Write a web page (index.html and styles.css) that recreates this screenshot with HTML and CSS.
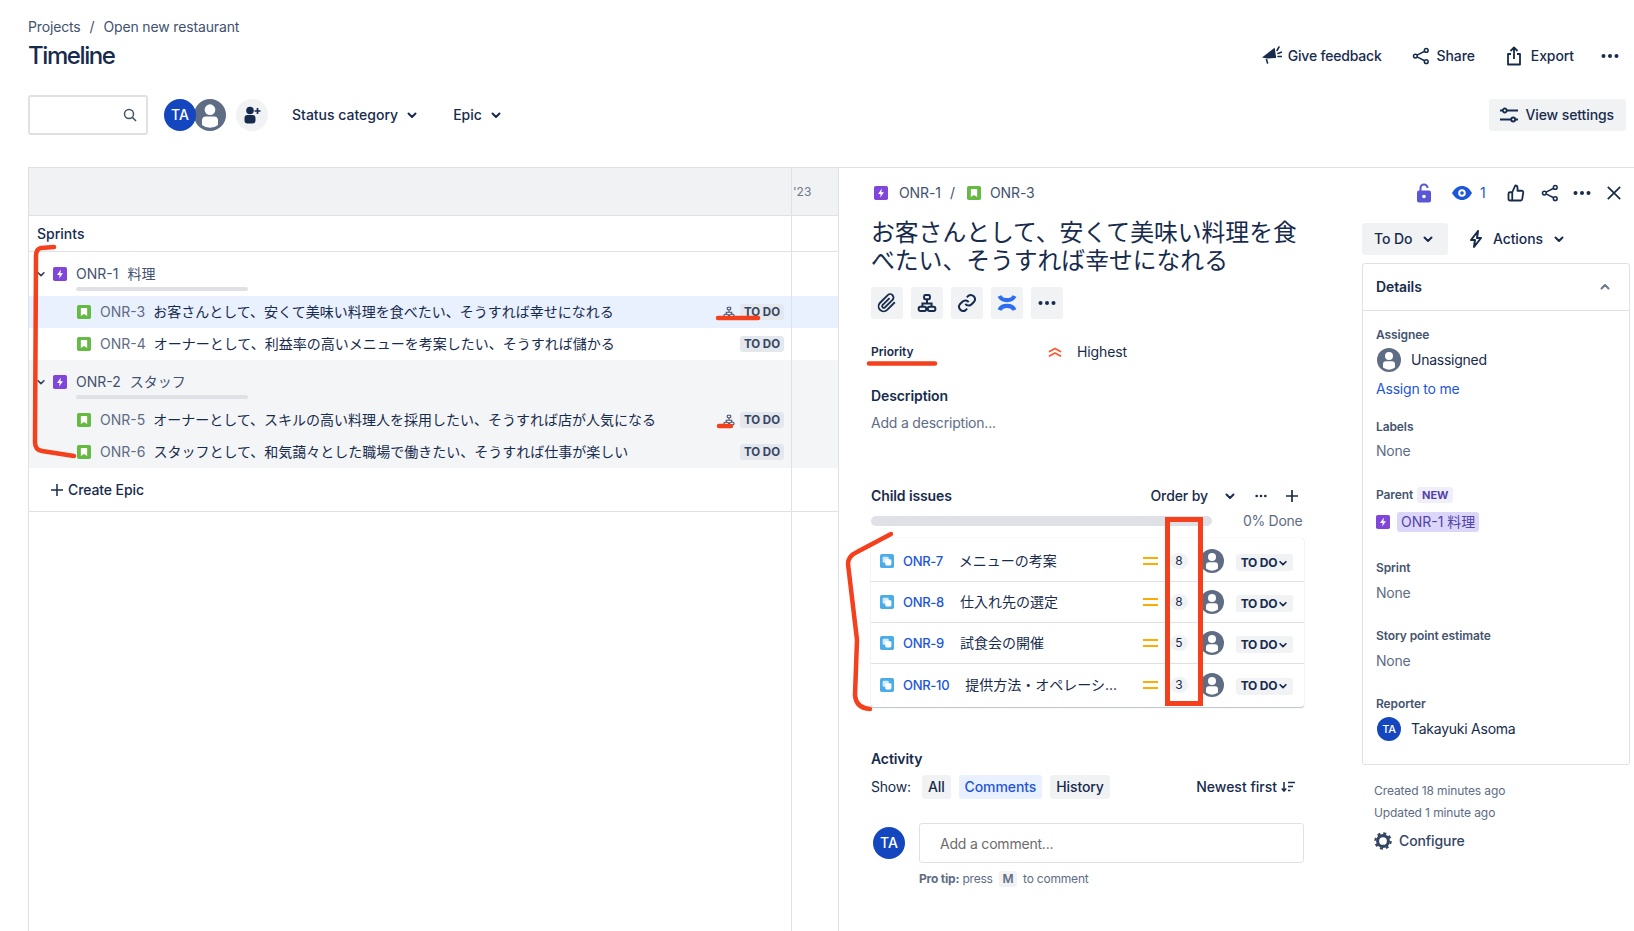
FILE: index.html
```html
<!DOCTYPE html>
<html lang="en">
<head>
  <meta charset="UTF-8">
  <title>Timeline</title>
  <link rel="stylesheet" href="styles.css">
</head>
<body>
  <svg class="sprite" width="0" height="0">
    <symbol id="chev" viewBox="0 0 12 12"><path d="M2.500 4.500 6 8l3.500-3.500" fill="none" stroke="currentColor" stroke-width="2" stroke-linecap="round" stroke-linejoin="round"/></symbol>
    <symbol id="dots" viewBox="0 0 18 6"><circle cx="2.500" cy="3" r="2"/><circle cx="9" cy="3" r="2"/><circle cx="15.500" cy="3" r="2"/></symbol>
    <symbol id="share" viewBox="0 0 24 24"><g fill="none" stroke="currentColor" stroke-width="2"><circle cx="19" cy="4.500" r="2.500"/><circle cx="4.500" cy="12" r="2.500"/><circle cx="19" cy="19.500" r="2.500"/><path d="M6.800 10.800 16.800 5.700M6.800 13.200l10 5.100"/></g></symbol>
    <symbol id="epic" viewBox="0 0 16 16"><rect width="16" height="16" rx="2" fill="#7f46d9"/><path d="M9 2.800 4.600 9h3l-.6 4.200L11.400 7h-3z" fill="#fff"/></symbol>
    <symbol id="story" viewBox="0 0 16 16"><rect width="16" height="16" rx="2" fill="#65ba43"/><path d="M5 3.500h6a.6.6 0 0 1 .6.6v8.600L8 10.300l-3.600 2.400V4.100a.6.6 0 0 1 .6-.6z" fill="#fff"/></symbol>
    <symbol id="subtask" viewBox="0 0 16 16"><rect width="16" height="16" rx="2" fill="#4bade8"/><rect x="3" y="3" width="7" height="7" rx="1.500" fill="#fff" opacity=".75"/><rect x="6" y="6" width="7" height="7" rx="1.500" fill="#fff"/></symbol>
    <symbol id="nobody" viewBox="0 0 24 24"><circle cx="12" cy="12" r="12" fill="#5e6c84"/><circle cx="12" cy="8" r="4" fill="#fff"/><path d="M6 16.200a3 3 0 0 1 3-3h6a3 3 0 0 1 3 3v3.300a9.500 9.500 0 0 1-12 0z" fill="#fff"/></symbol>
    <symbol id="tree" viewBox="0 0 24 24"><g fill="none" stroke="currentColor"><rect x="8.500" y="2.500" width="7" height="5" rx="1.500"/><rect x="2" y="16.500" width="9" height="5" rx="2"/><rect x="13" y="16.500" width="9" height="5" rx="2"/><path d="M12 7.500v5M6.500 16.500v-4h11v4"/></g></symbol>
  </svg>

  <header class="page-head">
    <div>
      <nav class="crumbs"><span>Projects</span><span class="crumb-sep">/</span><span>Open new restaurant</span></nav>
      <h1 class="page-title">Timeline</h1>
    </div>
    <div class="page-actions">
      <span class="action action-feedback">
        <svg class="icon-20" viewBox="0 0 20 20"><path d="M0 11.500 12.700 1.700 14.200 12 5.500 12.500z" fill="currentColor"/><path d="M4.500 13.500l1 3.500M15 4.500 17 1M16 7.500l4-1.500M16 10.500h4" fill="none" stroke="currentColor" stroke-width="1.600" stroke-linecap="round"/></svg>
        Give feedback
      </span>
      <span class="action action-share"><svg class="icon-18"><use href="#share"/></svg>Share</span>
      <span class="action action-export">
        <svg class="icon-20" viewBox="0 0 20 20"><path d="M10 13V2M6.500 5 10 1.500 13.500 5M7 8H4v10.500h12V8h-3" fill="none" stroke="currentColor" stroke-width="1.800" stroke-linejoin="round"/></svg>
        Export
      </span>
      <svg class="more-icon"><use href="#dots"/></svg>
    </div>
  </header>

  <div class="toolbar">
    <div class="search">
      <svg class="icon-14" viewBox="0 0 14 14"><circle cx="6" cy="6" r="4.500" fill="none" stroke="#44546f" stroke-width="1.500"/><path d="m9.500 9.500 3.500 3.500" stroke="#44546f" stroke-width="1.600"/></svg>
    </div>
    <div class="avatars">
      <span class="avatar avatar-me">TA</span>
      <svg class="avatar-nobody"><use href="#nobody"/></svg>
    </div>
    <span class="add-person">
      <svg class="icon-20" viewBox="0 0 20 20"><circle cx="8" cy="5.500" r="3.800" fill="#172b4d"/><path d="M2.500 13a3 3 0 0 1 3-3h5a3 3 0 0 1 3 3v2.500a3 3 0 0 1-3 3h-5a3 3 0 0 1-3-3z" fill="#172b4d"/><path d="M15.500 3v6M12.500 6h6" stroke="#172b4d" stroke-width="1.700"/></svg>
    </span>
    <span class="filter">Status category<svg class="chev"><use href="#chev"/></svg></span>
    <span class="filter">Epic<svg class="chev"><use href="#chev"/></svg></span>
    <span class="view-settings">
      <svg class="icon-18" viewBox="0 0 18 18"><g fill="none" stroke="currentColor" stroke-width="1.800"><path d="M0 4.500h2.500M7 4.500h11M0 13.500h11M15.500 13.500H18"/><circle cx="4.800" cy="4.500" r="2"/><circle cx="13.200" cy="13.500" r="2"/></g></svg>
      View settings
    </span>
  </div>

  <main class="workspace">
    <section class="timeline">
      <div class="timeline-divider"></div>
      <div class="chart-head"><span class="year">'23</span></div>
      <div class="sprints">Sprints</div>

      <div class="epic-row">
        <div class="epic-line">
          <svg class="chev-small"><use href="#chev"/></svg>
          <svg class="icon-14"><use href="#epic"/></svg>
          <span class="epic-key">ONR-1</span><span class="epic-name">料理</span>
        </div>
        <div class="epic-bar"></div>
      </div>
      <div class="row row-selected">
        <svg class="icon-14"><use href="#story"/></svg>
        <span class="row-key">ONR-3</span>
        <span class="row-text">お客さんとして、安くて美味い料理を食べたい、そうすれば幸せになれる</span>
        <svg class="row-tree"><use href="#tree"/></svg>
        <span class="lozenge">TO DO</span>
      </div>
      <div class="row">
        <svg class="icon-14"><use href="#story"/></svg>
        <span class="row-key">ONR-4</span>
        <span class="row-text">オーナーとして、利益率の高いメニューを考案したい、そうすれば儲かる</span>
        <span class="lozenge">TO DO</span>
      </div>

      <div class="group-alt">
        <div class="epic-row">
          <div class="epic-line">
            <svg class="chev-small"><use href="#chev"/></svg>
            <svg class="icon-14"><use href="#epic"/></svg>
            <span class="epic-key">ONR-2</span><span class="epic-name">スタッフ</span>
          </div>
          <div class="epic-bar"></div>
        </div>
        <div class="row">
          <svg class="icon-14"><use href="#story"/></svg>
          <span class="row-key">ONR-5</span>
          <span class="row-text">オーナーとして、スキルの高い料理人を採用したい、そうすれば店が人気になる</span>
          <svg class="row-tree"><use href="#tree"/></svg>
          <span class="lozenge">TO DO</span>
        </div>
        <div class="row">
          <svg class="icon-14"><use href="#story"/></svg>
          <span class="row-key">ONR-6</span>
          <span class="row-text">スタッフとして、和気藹々とした職場で働きたい、そうすれば仕事が楽しい</span>
          <span class="lozenge">TO DO</span>
        </div>
      </div>

      <div class="create-epic">
        <svg class="icon-14" viewBox="0 0 14 14"><path d="M7 1v12M1 7h12" stroke="#172b4d" stroke-width="1.500"/></svg>
        Create Epic
      </div>
    </section>

    <aside class="issue">
      <div class="issue-top">
        <div class="issue-crumbs">
          <svg class="icon-14"><use href="#epic"/></svg><span class="issue-key">ONR-1</span>
          <span class="crumb-slash">/</span>
          <svg class="icon-14"><use href="#story"/></svg><span class="issue-key">ONR-3</span>
        </div>
        <div class="issue-icons">
          <svg class="top-lock" viewBox="0 0 14 20"><path d="M3.500 9V5a3.500 3.500 0 0 1 7 0" fill="none" stroke="#5a57d6" stroke-width="2"/><rect y="7.500" width="14" height="12" rx="2" fill="#5a57d6"/><circle cx="7" cy="13.500" r="1.800" fill="#fff"/></svg>
          <svg class="top-eye" viewBox="0 0 20 14"><path d="M0 7c2.500-4.500 6-7 10-7s7.500 2.500 10 7c-2.500 4.500-6 7-10 7S2.500 11.500 0 7z" fill="#1d56d8"/><circle cx="10" cy="7" r="3.800" fill="#fff"/><circle cx="10" cy="7" r="1.800" fill="#1d56d8"/></svg>
          <span class="watch-count">1</span>
          <svg class="top-thumb" viewBox="0 0 24 24"><path d="M14 9V5a3 3 0 0 0-3-3L7 11v11h11.300a2 2 0 0 0 2-1.700l1.400-9a2 2 0 0 0-2-2.300zM7 22H4a2 2 0 0 1-2-2v-7a2 2 0 0 1 2-2h3" fill="none" stroke="currentColor" stroke-width="2.400" stroke-linejoin="round"/></svg>
          <svg class="top-share"><use href="#share"/></svg>
          <svg class="more-icon top-more"><use href="#dots"/></svg>
          <svg class="top-close" viewBox="0 0 14 14"><path d="m.8.800 12.400 12.400M13.200.800.800 13.200" stroke="currentColor" stroke-width="1.700"/></svg>
        </div>
      </div>

      <div class="issue-body">
        <div class="issue-main">
          <h2 class="issue-title">お客さんとして、安くて美味い料理を食べたい、そうすれば幸せになれる</h2>
          <div class="quick-actions">
            <span class="quick-btn"><svg class="icon-20" viewBox="0 0 24 24"><path d="M21.400 11.100 12.200 20.200a6 6 0 0 1-8.500-8.500l9.200-9.200a4 4 0 0 1 5.700 5.700l-9.200 9.200a2 2 0 0 1-2.800-2.800l8.500-8.500" fill="none" stroke="currentColor" stroke-width="2.200"/></svg></span>
            <span class="quick-btn"><svg class="icon-20"><use href="#tree"/></svg></span>
            <span class="quick-btn"><svg class="icon-20" viewBox="0 0 24 24"><g fill="none" stroke="currentColor" stroke-width="2.400"><path d="M10 13a5 5 0 0 0 7.500.5l3-3a5 5 0 0 0-7-7l-1.700 1.700"/><path d="M14 11a5 5 0 0 0-7.500-.5l-3 3a5 5 0 0 0 7 7l1.700-1.700"/></g></svg></span>
            <span class="quick-btn"><svg class="icon-20" viewBox="0 0 20 20"><path d="M2.500 3C5 8.500 15 8.500 17.500 3M2.500 17C5 11.500 15 11.500 17.500 17" fill="none" stroke="#2d6df0" stroke-width="4.200"/></svg></span>
            <span class="quick-btn"><svg class="more-icon"><use href="#dots"/></svg></span>
          </div>
          <div class="priority">
            <span class="priority-label">Priority</span>
            <svg class="icon-14" viewBox="0 0 14 14"><path d="m1.500 6.500 5.500-3 5.500 3M1.500 11l5.500-3 5.500 3" fill="none" stroke="#ff5630" stroke-width="1.700" stroke-linecap="round" stroke-linejoin="round"/></svg>
            <span class="priority-value">Highest</span>
          </div>
          <h3 class="section-title section-desc">Description</h3>
          <p class="add-desc">Add a description...</p>

          <div class="child-head">
            <h3 class="section-title">Child issues</h3>
            <span class="order-by">Order by<svg class="chev"><use href="#chev"/></svg></span>
            <svg class="child-more"><use href="#dots"/></svg>
            <svg class="icon-14" viewBox="0 0 14 14"><path d="M7 1v12M1 7h12" stroke="#172b4d" stroke-width="1.700"/></svg>
          </div>
          <div class="child-progress"><div class="child-bar"></div><span class="done">0% Done</span></div>
          <div class="child-card">
            <div class="child-row">
              <svg class="icon-14"><use href="#subtask"/></svg>
              <a class="child-key">ONR-7</a>
              <span class="child-text">メニューの考案</span>
              <span class="medium"></span><span class="estimate">8</span>
              <svg class="icon-24"><use href="#nobody"/></svg>
              <span class="child-status">TO DO<svg class="chev-status"><use href="#chev"/></svg></span>
            </div>
            <div class="child-row">
              <svg class="icon-14"><use href="#subtask"/></svg>
              <a class="child-key">ONR-8</a>
              <span class="child-text">仕入れ先の選定</span>
              <span class="medium"></span><span class="estimate">8</span>
              <svg class="icon-24"><use href="#nobody"/></svg>
              <span class="child-status">TO DO<svg class="chev-status"><use href="#chev"/></svg></span>
            </div>
            <div class="child-row">
              <svg class="icon-14"><use href="#subtask"/></svg>
              <a class="child-key">ONR-9</a>
              <span class="child-text">試食会の開催</span>
              <span class="medium"></span><span class="estimate">5</span>
              <svg class="icon-24"><use href="#nobody"/></svg>
              <span class="child-status">TO DO<svg class="chev-status"><use href="#chev"/></svg></span>
            </div>
            <div class="child-row">
              <svg class="icon-14"><use href="#subtask"/></svg>
              <a class="child-key">ONR-10</a>
              <span class="child-text">提供方法・オペレーシ...</span>
              <span class="medium"></span><span class="estimate">3</span>
              <svg class="icon-24"><use href="#nobody"/></svg>
              <span class="child-status">TO DO<svg class="chev-status"><use href="#chev"/></svg></span>
            </div>
          </div>

          <h3 class="section-title section-activity">Activity</h3>
          <div class="show-row">
            <span class="show-label">Show:</span>
            <span class="show-btn">All</span>
            <span class="show-btn show-btn-on">Comments</span>
            <span class="show-btn">History</span>
            <span class="newest">Newest first
              <svg class="icon-14" viewBox="0 0 14 14"><path d="M3 2v9M.8 8.500 3 11l2.200-2.500M7 2.500h7M7 6.500h5M7 10.500h2.500" fill="none" stroke="#172b4d" stroke-width="1.500"/></svg>
            </span>
          </div>
          <div class="comment-row">
            <span class="avatar avatar-comment">TA</span>
            <div class="comment-box">Add a comment...</div>
          </div>
          <p class="pro-tip"><b>Pro tip:</b> press <kbd>M</kbd> to comment</p>
        </div>

        <div class="issue-side">
          <div class="status-row">
            <span class="status-btn">To Do<svg class="chev"><use href="#chev"/></svg></span>
            <span class="actions-btn">
              <svg class="bolt" viewBox="0 0 14 18"><path d="M9 1 2 10h4l-1 7 7-9H8z" fill="none" stroke="#172b4d" stroke-width="2" stroke-linejoin="round"/></svg>
              Actions<svg class="chev"><use href="#chev"/></svg>
            </span>
          </div>
          <div class="details">
            <div class="details-head">Details<svg class="chev chev-up"><use href="#chev"/></svg></div>
            <div class="details-body">
              <div class="field field-first">
                <div class="field-label">Assignee</div>
                <div class="person"><svg class="icon-24"><use href="#nobody"/></svg>Unassigned</div>
                <a class="assign-me">Assign to me</a>
              </div>
              <div class="field field-labels">
                <div class="field-label">Labels</div>
                <div class="field-none">None</div>
              </div>
              <div class="field">
                <div class="field-label">Parent <span class="new-badge">NEW</span></div>
                <div class="parent-row"><svg class="icon-14"><use href="#epic"/></svg><span class="parent-pill">ONR-1 料理</span></div>
              </div>
              <div class="field field-sprint">
                <div class="field-label">Sprint</div>
                <div class="field-none">None</div>
              </div>
              <div class="field">
                <div class="field-label">Story point estimate</div>
                <div class="field-none">None</div>
              </div>
              <div class="field">
                <div class="field-label">Reporter</div>
                <div class="person person-reporter"><span class="avatar avatar-small">TA</span>Takayuki Asoma</div>
              </div>
            </div>
          </div>
          <div class="dates">Created 18 minutes ago</div>
          <div class="dates">Updated 1 minute ago</div>
          <div class="configure">
            <svg class="icon-18" viewBox="0 0 20 20"><circle cx="10" cy="10" r="6" fill="none" stroke="#344563" stroke-width="3.400"/><circle cx="10" cy="10" r="8.500" fill="none" stroke="#344563" stroke-width="2.400" stroke-dasharray="3.340 3.340"/></svg>
            Configure
          </div>
        </div>
      </div>
    </aside>
  </main>

  <!-- red pen marks drawn on top of the screenshot -->
  <svg class="marks" viewBox="0 0 1634 931">
    <g fill="none" stroke="#f4401c" stroke-width="4.500" stroke-linecap="round" stroke-linejoin="round">
      <path d="M54 247 41 248Q36 249 36 256L35 442Q35 450 42 451L74 456"/>
      <path d="M718 318H758"/>
      <path d="M719 426H731"/>
      <path d="M869 363.500H935"/>
      <path d="M891 534 857 552Q848 556 848 564L857 640 855 695Q856 708 870 709"/>
    </g>
    <rect x="1167.500" y="519.500" width="33" height="184" fill="none" stroke="#f4401c" stroke-width="5"/>
  </svg>
</body>
</html>
```

FILE: styles.css
```css
* {
  box-sizing: border-box;
}
html, body {
  margin: 0;
  height: 931px;
  overflow: hidden;
}
body {
  position: relative;
  font-family: Inter, "Noto Sans CJK JP", sans-serif;
  font-size: 14px;
  line-height: 20px;
  color: #172b4d;
  background: #fff;
}
h1, h2, h3, p {
  margin: 0;
}
svg {
  flex: none;
  fill: currentColor;
}
.sprite {
  position: absolute;
}
.icon-14 { width: 14px; height: 14px; }
.icon-18 { width: 18px; height: 18px; }
.icon-20 { width: 20px; height: 20px; }
.icon-24 { width: 24px; height: 24px; }
.chev { width: 12px; height: 12px; }
.more-icon { width: 18px; height: 6px; }
.bolt { width: 14px; height: 18px; }

/* page header */
.page-head {
  display: flex;
  justify-content: space-between;
  align-items: flex-end;
  padding: 17px 15px 0 28px;
}
.crumbs {
  color: #42526e;
  letter-spacing: -.15px;
}
.crumb-sep {
  margin: 0 9px;
}
.page-title {
  margin-top: 5px;
  font-size: 24px;
  line-height: 28px;
  font-weight: 500;
  letter-spacing: -1.4px;
}
.page-actions {
  display: flex;
  align-items: center;
  height: 28px;
  font-weight: 500;
  letter-spacing: -.1px;
}
.action {
  display: flex;
  align-items: center;
  gap: 6px;
}
.action-feedback { letter-spacing: -.2px; }
.action-share { margin-left: 30px; gap: 7px; }
.action-export { margin-left: 29px; gap: 7px; }
.page-actions .more-icon { margin-left: 27px; }

.toolbar {
  display: flex;
  align-items: center;
  height: 40px;
  margin: 25px 8px 0 28px;
  font-weight: 500;
}
.search {
  display: flex;
  align-items: center;
  justify-content: flex-end;
  width: 120px;
  height: 40px;
  padding-right: 9px;
  border: 2px solid #dfe1e6;
  border-radius: 3px;
}
.avatars {
  display: flex;
  margin-left: 16px;
}
.avatar {
  display: inline-flex;
  align-items: center;
  justify-content: center;
  border-radius: 50%;
  background: #1446c0;
  color: #fff;
  font-weight: 500;
}
.avatar-me {
  position: relative;
  z-index: 1;
  width: 32px;
  height: 32px;
}
.avatar-nobody {
  width: 32px;
  height: 32px;
  margin-left: -2px;
}
.add-person {
  display: flex;
  align-items: center;
  justify-content: center;
  width: 32px;
  height: 32px;
  margin-left: 10px;
  border-radius: 50%;
  background: #f1f2f4;
}
.filter {
  display: flex;
  align-items: center;
  gap: 8px;
  margin-left: 24px;
}
.filter + .filter {
  margin-left: 35px;
}
.view-settings {
  display: flex;
  align-items: center;
  gap: 7px;
  height: 32px;
  margin-left: auto;
  padding: 0 12px 0 11px;
  border-radius: 3px;
  background: #f1f2f4;
  letter-spacing: -.1px;
}

/* timeline */
.workspace {
  display: flex;
  height: 764px;
  margin: 32px 0 0 28px;
  border-top: 1px solid #dfe1e6;
}
.timeline {
  position: relative;
  flex: none;
  width: 810px;
  border-left: 1px solid #dfe1e6;
}
.timeline-divider {
  position: absolute;
  z-index: 1;
  top: 0;
  bottom: 0;
  left: 762px;
  width: 1px;
  background: #dfe1e6;
}
.chart-head {
  display: flex;
  align-items: center;
  height: 48px;
  padding-left: 763px;
  border-bottom: 1px solid #dfe1e6;
  background: #f1f2f4;
}
.year {
  padding-left: 1px;
  font-size: 12px;
  color: #6b778c;
}
.sprints {
  height: 36px;
  padding: 8px 0 0 8px;
  border-bottom: 1px solid #dfe1e6;
  font-weight: 500;
}
.epic-row {
  height: 44px;
  padding: 12px 0 0 7px;
}
.epic-line {
  display: flex;
  align-items: center;
  height: 20px;
  color: #42526e;
}
.chev-small {
  width: 10px;
  height: 10px;
  margin-right: 7px;
  color: #344563;
}
.epic-key {
  margin-left: 9px;
}
.epic-name {
  margin-left: 9px;
}
.epic-bar {
  width: 172px;
  height: 4px;
  margin: 3px 0 0 40px;
  border-radius: 2px;
  background: #dfe1e6;
}
.row {
  display: flex;
  align-items: center;
  height: 32px;
  padding: 0 54px 0 48px;
}
.row-selected {
  background: #e9f0fe;
}
.group-alt {
  background: #f4f5f7;
}
.row-key {
  margin-left: 9px;
  color: #5e6c84;
}
.row-text {
  margin-left: 8px;
  color: #172b4d;
}
.row-tree {
  width: 12px;
  height: 12px;
  margin: 0 5px 0 auto;
  color: #44546f;
  stroke-width: 2.200;
}
.lozenge {
  width: 44px;
  margin-left: auto;
  border-radius: 3px;
  background: #e4e7ec;
  color: #344563;
  font-size: 11.500px;
  line-height: 16px;
  font-weight: 700;
  text-align: center;
}
.row-tree + .lozenge {
  margin-left: 0;
}
.create-epic {
  display: flex;
  align-items: center;
  gap: 4px;
  height: 44px;
  padding-left: 21px;
  border-bottom: 1px solid #dfe1e6;
  font-weight: 500;
  letter-spacing: -.1px;
}

/* issue panel */
.issue {
  flex: 1;
  padding: 13px 0 0 32px;
  border-left: 1px solid #dfe1e6;
}
.issue-top {
  display: flex;
  justify-content: space-between;
  align-items: center;
  height: 24px;
  padding-right: 13px;
}
.issue-crumbs {
  display: flex;
  align-items: center;
  padding-left: 3px;
}
.issue-key {
  margin-left: 11px;
  color: #42526e;
  letter-spacing: -.1px;
}
.crumb-slash {
  margin: 0 12px 0 9px;
  color: #42526e;
}
.crumb-slash ~ .issue-key {
  margin-left: 9px;
}
.issue-icons {
  display: flex;
  align-items: center;
}
.top-lock { width: 14px; height: 20px; }
.top-eye { width: 20px; height: 14px; margin-left: 21px; }
.watch-count { margin-left: 8px; width: 10px; color: #1d56d8; }
.top-thumb { width: 18px; height: 18px; margin-left: 17px; }
.top-share { width: 18px; height: 18px; margin-left: 16px; }
.top-more { margin-left: 14px; }
.top-close { width: 14px; height: 14px; margin-left: 16px; }

.issue-body {
  display: flex;
  margin-top: 14px;
}
.issue-main {
  width: 433px;
}
.issue-title {
  font-size: 23.800px;
  line-height: 27.500px;
  font-weight: 400;
}
.quick-actions {
  display: flex;
  gap: 8px;
  margin-top: 13px;
}
.quick-btn {
  display: flex;
  align-items: center;
  justify-content: center;
  width: 32px;
  height: 32px;
  border-radius: 3px;
  background: #f1f2f4;
  stroke-width: 2.400;
}
.priority {
  display: flex;
  align-items: center;
  margin-top: 23px;
}
.priority-label {
  width: 177px;
  font-size: 12px;
  font-weight: 600;
}
.priority-value {
  margin-left: 15px;
  letter-spacing: -.1px;
}
.section-title {
  font-size: 14px;
  line-height: 20px;
  font-weight: 600;
  letter-spacing: -.1px;
}
.section-desc {
  margin-top: 24px;
}
.add-desc {
  margin-top: 7px;
  color: #5e6c84;
  letter-spacing: -.2px;
}
.child-head {
  display: flex;
  align-items: center;
  margin-top: 53px;
  padding-right: 5px;
}
.order-by {
  display: flex;
  align-items: center;
  gap: 16px;
  margin-left: auto;
  font-weight: 500;
  letter-spacing: -.1px;
}
.child-more {
  width: 12px;
  height: 4px;
  margin: 0 18px 0 19px;
}
.child-progress {
  display: flex;
  align-items: center;
  margin-top: 10px;
  height: 10px;
}
.child-bar {
  flex: none;
  width: 341px;
  height: 10px;
  border-radius: 5px;
  background: #dfe1e6;
}
.done {
  flex: none;
  margin-left: 31px;
  color: #5e6c84;
  letter-spacing: -.3px;
  white-space: nowrap;
}
.child-card {
  margin-top: 12px;
  padding: 3px 0 2px;
  border-radius: 3px;
  box-shadow: 0 1px 1px rgba(9, 30, 66, .25), 0 0 1px rgba(9, 30, 66, .2);
}
.child-row {
  display: flex;
  align-items: center;
  height: 41px;
  padding: 0 11px 0 9px;
  border-bottom: 1px solid #dfe1e6;
}
.child-row:last-child {
  border-bottom: 0;
}
.child-key {
  margin-left: 9px;
  color: #1d56d8;
  font-size: 13px;
  font-weight: 500;
  letter-spacing: -.3px;
}
.child-text {
  flex: 1;
  margin-left: 16px;
}
.medium {
  width: 15px;
  height: 8px;
  border-top: 2px solid #ffab00;
  border-bottom: 2px solid #ffab00;
}
.estimate {
  width: 18px;
  margin: 0 12px 0 12px;
  border-radius: 8px;
  background: #f1f2f4;
  font-size: 12px;
  line-height: 16px;
  text-align: center;
}
.child-status {
  display: flex;
  align-items: center;
  justify-content: center;
  gap: 1px;
  width: 57px;
  height: 17px;
  margin: 3px 0 0 12px;
  border-radius: 3px;
  background: #f1f2f4;
  font-size: 12px;
  font-weight: 700;
  letter-spacing: -.2px;
}
.chev-status {
  width: 10px;
  height: 10px;
}
.section-activity {
  margin-top: 42px;
}
.show-row {
  display: flex;
  align-items: center;
  gap: 8px;
  height: 24px;
  margin-top: 6px;
}
.show-label {
  margin-right: 3px;
  letter-spacing: -.2px;
}
.show-btn {
  height: 24px;
  padding: 2px 6px;
  border-radius: 3px;
  background: #f1f2f4;
  font-weight: 500;
  letter-spacing: -.1px;
}
.show-btn-on {
  background: #e9f0fe;
  color: #1d56d8;
}
.newest {
  display: flex;
  align-items: center;
  gap: 4px;
  margin-left: auto;
  padding-right: 9px;
  font-weight: 500;
}
.comment-row {
  display: flex;
  align-items: flex-start;
  margin-top: 24px;
}
.avatar-comment {
  width: 32px;
  height: 32px;
  margin: 4px 14px 0 2px;
}
.comment-box {
  flex: 1;
  height: 40px;
  padding: 10px 20px;
  border: 1px solid #dfe1e6;
  border-radius: 3px;
  color: #6b6b6b;
  letter-spacing: -.2px;
}
.pro-tip {
  margin: 6px 0 0 48px;
  font-size: 12px;
  color: #5e6c84;
  letter-spacing: -.2px;
}
kbd {
  display: inline-block;
  width: 18px;
  margin: 0 3px;
  border-radius: 3px;
  background: #f1f2f4;
  font-family: inherit;
  font-weight: 600;
  line-height: 16px;
  text-align: center;
}

/* right column */
.issue-side {
  width: 268px;
  margin-left: 58px;
  padding-top: 4px;
}
.status-row {
  display: flex;
  align-items: center;
  height: 32px;
}
.status-btn {
  display: flex;
  align-items: center;
  gap: 10px;
  width: 86px;
  height: 32px;
  padding-left: 12px;
  border-radius: 3px;
  background: #f1f2f4;
  font-weight: 500;
  letter-spacing: -.1px;
}
.actions-btn {
  display: flex;
  align-items: center;
  gap: 10px;
  margin-left: 21px;
  font-weight: 500;
  letter-spacing: -.1px;
}
.details {
  height: 502px;
  margin-top: 8px;
  border: 1px solid #dfe1e6;
  border-radius: 3px;
}
.details-head {
  display: flex;
  justify-content: space-between;
  align-items: center;
  height: 47px;
  padding: 0 18px 0 13px;
  border-bottom: 1px solid #dfe1e6;
  font-weight: 600;
  letter-spacing: -.1px;
}
.chev-up {
  transform: rotate(180deg);
  color: #6b778c;
}
.details-body {
  padding: 16px 13px 0;
}
.field {
  margin-top: 25px;
}
.field-first {
  margin-top: 0;
}
.field-labels {
  margin-top: 20px;
  padding-bottom: 1px;
}
.field-sprint {
  margin-top: 28px;
}
.field-label {
  display: flex;
  align-items: center;
  gap: 4px;
  height: 16px;
  margin-bottom: 7px;
  color: #44546f;
  font-size: 12px;
  font-weight: 600;
  letter-spacing: -.1px;
}
.field-labels .field-label {
  margin-bottom: 6px;
}
.field-none {
  color: #5e6c84;
  letter-spacing: -.2px;
}
.person {
  display: flex;
  align-items: center;
  gap: 10px;
  height: 24px;
  padding-left: 1px;
  letter-spacing: -.25px;
}
.field-first .field-label {
  margin-bottom: 5px;
}
.person-reporter {
  margin-top: -2px;
}
.avatar-small {
  width: 24px;
  height: 24px;
  font-size: 11px;
}
.assign-me {
  display: block;
  margin-top: 7px;
  color: #1d56d8;
  letter-spacing: -.2px;
}
.new-badge {
  padding: 0 5px;
  border-radius: 3px;
  background: #f1eefc;
  color: #5243aa;
  font-size: 11px;
  line-height: 16px;
  font-weight: 700;
}
.parent-row {
  display: flex;
  align-items: center;
  gap: 7px;
  margin-top: 9px;
}
.parent-pill {
  height: 20px;
  padding: 0 4px;
  border-radius: 3px;
  background: #dcd7f8;
  color: #5243aa;
}
.dates {
  margin: 6px 0 0 12px;
  color: #5e6c84;
  font-size: 12px;
  line-height: 16px;
  letter-spacing: -.1px;
}
.details + .dates {
  margin-top: 18px;
}
.configure {
  display: flex;
  align-items: center;
  gap: 7px;
  margin: 10px 0 0 12px;
  color: #344563;
  font-weight: 500;
  letter-spacing: -.1px;
}

.marks {
  position: absolute;
  z-index: 2;
  top: 0;
  left: 0;
  width: 1634px;
  height: 931px;
  fill: none;
}
```
